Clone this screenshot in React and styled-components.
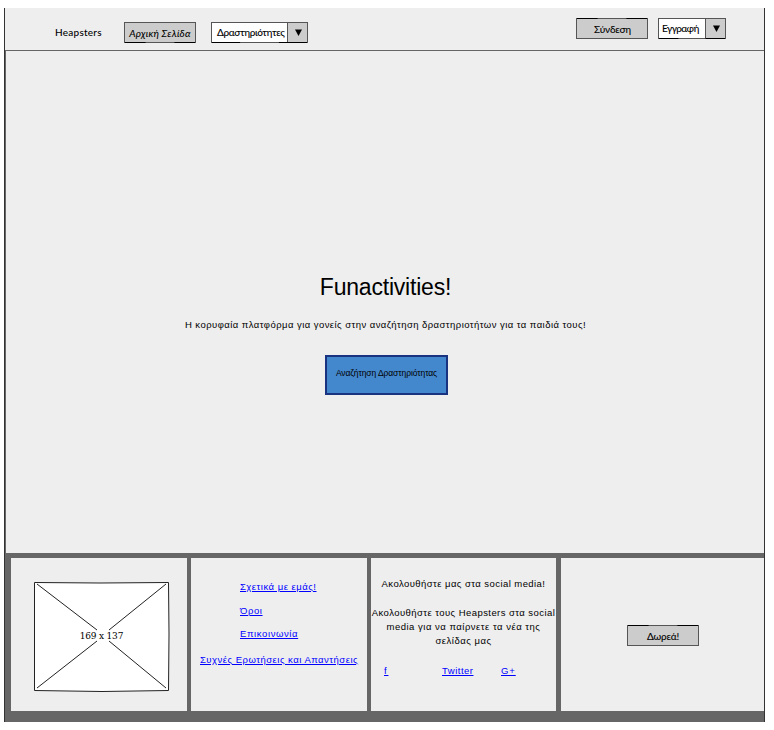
import React from "react";
import styled, { createGlobalStyle } from "styled-components";

const GlobalStyle = createGlobalStyle`
  *, *::before, *::after { box-sizing: border-box; }
  body { margin: 0; background: #fff; color: #000; }
`;

const Frame = styled.div`
  width: 761px;
  height: 714px;
  margin: 8px 0 0 4px;
  display: flex;
  flex-direction: column;
  background: #eee;
  border: solid #333;
  border-width: 0 1px;
  font-family: "Liberation Sans", Arial, sans-serif;
  font-size: 9.5px;
  line-height: 14px;
`;

const Header = styled.header`
  height: 43px;
  flex: none;
  display: flex;
  align-items: flex-start;
  border-bottom: 1px solid #666;
`;

const Brand = styled.span`
  width: 69px;
  margin: 17px 0 0 50px;
  font-family: Lato, sans-serif;
  font-size: 10px;
  font-weight: 500;
  letter-spacing: 0.24px;
  white-space: nowrap;
`;

const Group = styled.div`
  display: flex;
  gap: ${(p) => p.$gap};
  margin-top: ${(p) => p.$top};
  margin-left: ${(p) => p.$left || 0};
`;

const SketchButton = styled.button`
  position: relative;
  flex: none;
  width: 72px;
  height: 21px;
  padding: ${(p) => p.$pad || "0 0 0 1px"};
  border: 0;
  background: #ccc;
  color: #000;
  font: ${(p) => (p.$italic ? "italic" : "normal")} 500 10px/14px Lato, sans-serif;
  letter-spacing: ${(p) => p.$spacing || "0"};
  text-align: center;
  white-space: nowrap;
`;

const Select = styled.div`
  position: relative;
  display: flex;
  width: ${(p) => p.$width};
  height: 21px;
  background: #fff;
`;

const SelectValue = styled.span`
  flex: 1;
  padding: 3px 0 0 ${(p) => p.$inset};
  font: 500 10px/14px Lato, sans-serif;
  letter-spacing: ${(p) => p.$spacing};
  white-space: nowrap;
`;

const Arrow = styled.span`
  width: 21px;
  display: flex;
  align-items: center;
  justify-content: center;
  background: #ccc;
  border-left: 1px solid #555;
`;

const Outline = styled.svg`
  position: absolute;
  inset: 0;
  width: 100%;
  height: 100%;
  pointer-events: none;
`;

const Hero = styled.main`
  height: 502px;
  flex: none;
  display: flex;
  flex-direction: column;
  align-items: center;
  padding: 221px 0 0 3px;
  border-left: 1px solid #666;
`;

const Title = styled.h1`
  margin: 0 2px 0 0;
  font-size: 23px;
  line-height: 30px;
  font-weight: 400;
  letter-spacing: -0.2px;
`;

const Lead = styled.p`
  margin: 16px 2px 0 0;
  letter-spacing: 0.446px;
  white-space: nowrap;
`;

const Cta = styled.button`
  width: 123px;
  height: 40px;
  margin-top: 23px;
  padding: 0 0 4px;
  border: 2px solid #1a3380;
  background: #4387cd;
  color: #000;
  font: 400 8.5px/14px "Liberation Sans", Arial, sans-serif;
  letter-spacing: -0.09px;
  white-space: nowrap;
`;

const Footer = styled.footer`
  flex: 1;
  display: grid;
  grid-template-columns: 176px 176px 185px 204px;
  column-gap: 4px;
  padding: 5px 0 11px 6px;
  background: #666;

  & > :last-child { margin-left: 1px; }
`;

const Cell = styled.section`
  background: #eee;
  display: flex;
  flex-direction: column;
  align-items: ${(p) => p.$align || "stretch"};
  padding: ${(p) => p.$pad};
`;

const Placeholder = styled.div`
  position: relative;
  width: 136px;
  height: 111px;
  display: flex;
  align-items: center;
  justify-content: center;
  font: 9px/14px "DejaVu Serif", serif;
  letter-spacing: -0.2px;
`;

const PlaceholderLabel = styled.span`
  position: relative;
  padding: 0 1px 1px 0;
`;

const Link = styled.a`
  color: #00f;
  text-decoration: underline;
  text-underline-offset: 1px;
  letter-spacing: ${(p) => p.$spacing || "0.49px"};
  margin: ${(p) => p.$margin || 0};
  white-space: nowrap;
`;

const Note = styled.p`
  margin: 0 0 ${(p) => p.$after || "0"};
  letter-spacing: ${(p) => p.$spacing || "0.435px"};
  text-align: center;
  white-space: nowrap;
`;

const SocialRow = styled.nav`
  display: grid;
  grid-template-columns: 58px 59px auto;
  padding-left: 13px;
`;

function SketchOutline({ w, h, flip }) {
  const heavy = flip ? 0.5 : h - 0.5;
  return (
    <Outline viewBox={`0 0 ${w} ${h}`} fill="none" aria-hidden="true">
      <rect x="0.5" y="0.5" width={w - 1} height={h - 1} stroke="#555" />
      <path
        d={`M1 ${heavy}H${w * 0.3}M${w * 0.7} ${heavy}H${w - 1}`}
        stroke="#000"
      />
    </Outline>
  );
}

function Dropdown({ width, inset, spacing, children }) {
  return (
    <Select $width={`${width}px`}>
      <SelectValue $inset={inset} $spacing={spacing}>{children}</SelectValue>
      <Arrow>
        <svg width="7" height="7" viewBox="0 0 7 7" aria-hidden="true">
          <path d="M0 0.5H7L3.5 7Z" />
        </svg>
      </Arrow>
      <SketchOutline w={width} h={21} />
    </Select>
  );
}

export default function App() {
  return (
    <>
      <GlobalStyle />
      <Frame>
        <Header>
          <Brand>Heapsters</Brand>
          <Group $gap="15px" $top="14px">
            <SketchButton $italic $pad="1px 0 0" $spacing="0.2px">
              Αρχική Σελίδα
              <SketchOutline w={72} h={21} />
            </SketchButton>
            <Dropdown width={97} inset="6px" spacing="-0.4px">Δραστηριότητες</Dropdown>
          </Group>
          <Group $gap="10px" $top="10px" $left="268px">
            <SketchButton $spacing="-0.2px">
              Σύνδεση
              <SketchOutline w={72} h={21} flip />
            </SketchButton>
            <Dropdown width={68} inset="4px" spacing="-0.65px">Εγγραφή</Dropdown>
          </Group>
        </Header>
        <Hero>
          <Title>Funactivities!</Title>
          <Lead>Η κορυφαία πλατφόρμα για γονείς στην αναζήτηση δραστηριοτήτων για τα παιδιά τους!</Lead>
          <Cta>Αναζήτηση Δραστηριότητας</Cta>
        </Hero>
        <Footer>
          <Cell $pad="23px 0 0 23px">
            <Placeholder>
              <Outline viewBox="0 0 136 111" aria-hidden="true">
                <path d="M.5 1.5L66 2L134.5 1.5L135 53L134.5 109.5L68 110.5L.5 109.5L.5 53Z" fill="#fff" stroke="#222" />
                <path d="M3 3L63 49M75 60L132 107M132 3L75 49M63 60L3 107" fill="none" stroke="#222" />
              </Outline>
              <PlaceholderLabel>169 x 137</PlaceholderLabel>
            </Placeholder>
          </Cell>
          <Cell $align="flex-start" $pad="22px 0 0 9px">
            <Link href="#" $margin="0 0 0 40px" $spacing="0.5px">Σχετικά με εμάς!</Link>
            <Link href="#" $margin="10px 0 0 40px" $spacing="0.6px">Όροι</Link>
            <Link href="#" $margin="9px 0 0 40px" $spacing="0.6px">Επικοινωνία</Link>
            <Link href="#" $margin="12px 0 0">Συχνές Ερωτήσεις και Απαντήσεις</Link>
          </Cell>
          <Cell $pad="19px 0 0">
            <Note $after="15px">Ακολουθήστε μας στα social media!</Note>
            <Note>Ακολουθήστε τους Heapsters στα social</Note>
            <Note $spacing="0.5px">media για να παίρνετε τα νέα της</Note>
            <Note $after="16px" $spacing="0.5px">σελίδας μας</Note>
            <SocialRow>
              <div><Link href="#" $spacing="1.8px">f</Link></div>
              <div><Link href="#" $spacing="0.5px">Twitter</Link></div>
              <div><Link href="#" $spacing="0.9px">G+</Link></div>
            </SocialRow>
          </Cell>
          <Cell $align="flex-start" $pad="67px 0 0 66px">
            <SketchButton $pad="1px 0 0" $spacing="-0.2px">
              Δωρεά!
              <SketchOutline w={72} h={21} flip />
            </SketchButton>
          </Cell>
        </Footer>
      </Frame>
    </>
  );
}
